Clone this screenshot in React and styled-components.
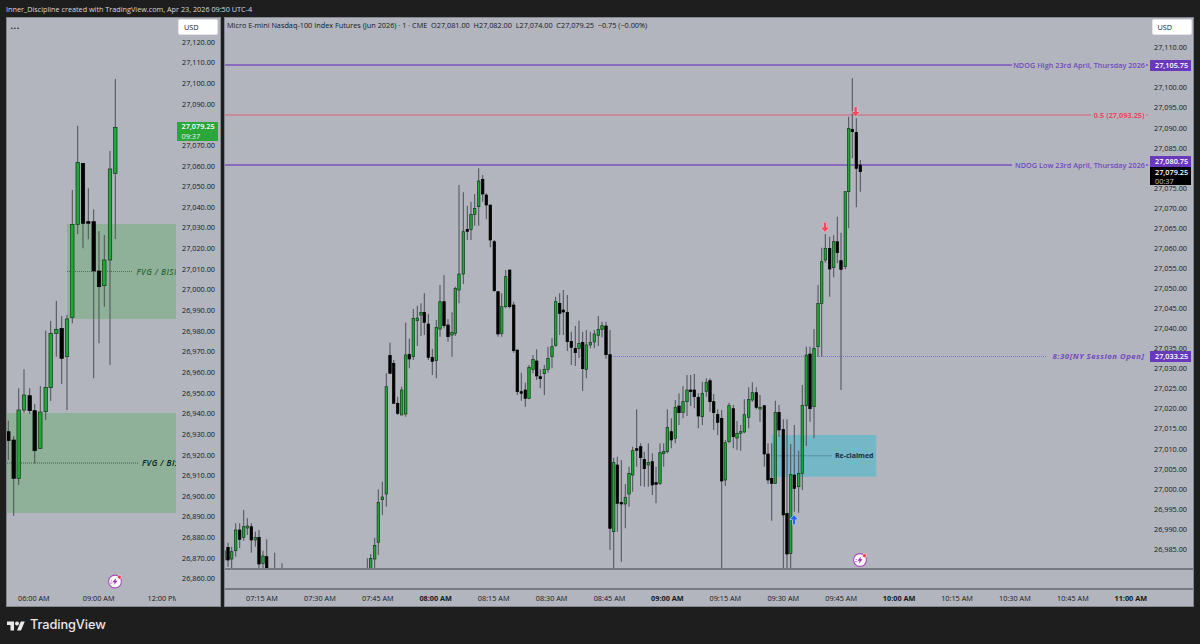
import React from "react";
import styled, { createGlobalStyle } from "styled-components";

const GlobalStyle = createGlobalStyle`
  html, body { margin: 0; padding: 0; background: #1e1e1e; }
  #root { width: 1200px; height: 644px; overflow: hidden; }
`;

const SANS = `"Open Sans", "Noto Sans", sans-serif`;

const Page = styled.div`
  width: 1200px; height: 644px; background: #1e1e1e;
  display: flex; flex-direction: column; font-family: ${SANS};
`;
const Header = styled.div`
  height: 17px; padding-left: 6px; color: #d6d8de; font-size: 7.25px; font-weight: 500; line-height: 18px; white-space: nowrap;
`;
const Panes = styled.div`
  display: flex; gap: 3px; padding-left: 6px; height: 590px;
`;
const Pane = styled.section`
  box-sizing: border-box; width: ${p => p.$w}px; height: 590px; border: 1px solid #84878f;
  background: #b2b5be; display: flex; flex-direction: column;
`;
const Body = styled.div`
  box-sizing: border-box; display: flex; height: ${p => p.$h}px;
  border-bottom: ${p => (p.$line ? "2px solid #777a82" : "none")};
`;
const Plot = styled.div`
  position: relative; width: ${p => p.$w}px; overflow: hidden; flex: none;
  svg { display: block; width: 100%; height: 100%; }
`;
const Axis = styled.div`
  position: relative; flex: 1; padding-top: ${p => p.$pad}px; overflow: hidden;
`;
const Scale = styled.div`
  height: ${p => p.$step}px; line-height: ${p => p.$step}px; text-align: right; padding-right: ${p => p.$right}px;
  font-size: 7.3px; font-weight: 500; color: #131722; white-space: nowrap;
`;
const UsdButton = styled.button`
  position: absolute; top: 1px; left: ${p => p.$left}px; width: 40px; height: 16px; box-sizing: border-box;
  background: #fff; border: 1px solid #e3e4e8; border-radius: 2px; padding: 0 0 0 5px; text-align: left;
  font: 500 7.3px ${SANS}; color: #131722;
`;
const PriceTag = styled.div`
  position: absolute; top: ${p => p.$top}px; left: ${p => p.$left}px; width: 41px; height: ${p => p.$h}px;
  background: ${p => p.$bg}; color: #fff; font-size: 7.3px; line-height: ${p => p.$lh || p.$h}px; padding-left: 5px; box-sizing: border-box;
  font-weight: 600; white-space: nowrap;
`;
const TagTime = styled.div`
  color: ${p => p.$c || "#fff"}; line-height: 8px; font-weight: 500;
`;
const Strip = styled.div`
  box-sizing: border-box; height: 20px; border-bottom: 2px solid #777a82;
`;
const TimeAxis = styled.div`
  height: 16px; width: ${p => p.$w}px; overflow: hidden; display: flex; padding-left: ${p => p.$pad}px; box-sizing: border-box;
`;
const TimeLabel = styled.div`
  flex: 0 0 ${p => p.$step}px; text-align: ${p => p.$align}; font-size: 7.3px; line-height: 17px; white-space: nowrap;
  color: #131722; font-weight: ${p => (p.$bold ? 700 : 500)};
`;
const Dots = styled.div`
  position: absolute; left: 3.5px; top: 3px; color: #1a1a1a; font-size: 9px; font-weight: 700; line-height: 9px; letter-spacing: 0.5px;
`;
const Legend = styled.div`
  position: absolute; left: 2px; top: 2px; color: #131722; font-size: 7.3px; font-weight: 500; line-height: 10px; white-space: nowrap;
`;
const DrawLabel = styled.div`
  position: absolute; top: ${p => p.$y}px; transform: translateY(-50%); white-space: nowrap;
  ${p => (p.$right !== undefined ? `right:${p.$right}px;` : `left:${p.$left}px;`)}
  color: ${p => p.$c}; font-size: ${p => p.$fs || 7.3}px; font-weight: ${p => p.$w || 600};
  font-style: ${p => (p.$it ? "italic" : "normal")}; letter-spacing: ${p => p.$ls || 0}px; line-height: 10px;
`;
const Footer = styled.footer`
  flex: 1; display: flex; align-items: flex-start; gap: 5px; padding: 10px 0 0 7px; color: #e9e9ea;
  svg { width: 18px; height: 14px; margin-top: 1px; fill: #e9e9ea; }
`;
const Brand = styled.span`
  font: 500 12.8px/16px Inter, Roboto, sans-serif; letter-spacing: -0.1px;
`;

/* zoom-derived candle tables: [x, colour, wickTop, bodyTop, bodyBottom, wickBottom] */
const g = "g", b = "b";
const groups = [
  { ox: 224, oy: 360, rows: [
    [0,g,548,572,600,620],[12,b,548,562,600,620],[23,g,560,575,597,626],[35,g,490,510,572,590],[47,b,490,510,538,565],
    [59,g,450,500,532,542],[70,g,475,498,504,525],[82,b,490,500,540,578],[94,g,515,532,540,560],[105,b,510,532,612,626],
    [117,g,572,588,610,626],[128,b,538,590,626,626],[152,null,578,0,0,626],[174,null,610,0,0,626],[430,null,595,0,0,626],
    [440,g,582,595,626,626],[452,g,533,556,597,626],[463,g,388,427,547,585],[475,g,365,411,419,465],[487,g,40,80,402,440],
  ]},
  { ox: 224, oy: 160, rows: [
    [498,b,548,586,640,640],[509,b,600,610,730,730],[521,b,710,730,760,765],[533,g,680,690,765,765],[545,g,488,585,762,770],
    [556,b,536,583,597,625],[568,g,447,475,590,600],[580,g,437,474,482,558],[591,g,430,457,465,528],[601,b,400,457,487,525],
    [613,b,462,492,592,600],[625,b,567,592,604,645],[637,g,480,502,602,655],[648,g,375,425,507,530],[660,b,345,425,497,505],
    [672,b,477,495,530,545],[684,g,457,517,525,590],[694,g,380,385,520,528],[705,g,75,342,390,430],[718,g,97,215,342,372],
    [730,b,137,208,214,240],[741,g,125,163,208,240],[752,g,102,145,163,197],[764,g,25,63,140,197],[776,b,45,58,102,125],
    [787,b,100,105,135,178],[799,b,135,135,240,262],[811,b,240,245,392,395],[822,b,395,395,522,530],
  ]},
  { ox: 500, oy: 280, rows: [
    [5,g,40,80,160,170],[17,g,-30,-10,80,85],[29,b,-30,-30,80,85],[41,b,65,75,212,218],[52,b,210,210,335,345],[64,b,278,335,338,362],
    [76,b,308,330,355,380],[87,g,255,262,355,358],[99,g,225,238,268,280],[110,b,208,243,288,300],[121,b,268,290,296,325],
    [133,g,255,268,281,345],[144,g,200,235,268,278],[156,g,175,200,230,265],[167,g,50,65,196,200],[179,b,40,70,100,165],
    [190,b,30,90,96,165],[202,b,45,97,185,213],[214,b,155,184,202,255],[226,b,138,205,218,258],[237,g,122,190,205,235],
    [248,b,155,187,266,333],[259,g,150,195,268,295],[271,g,155,187,195,205],[283,g,150,162,186,205],[295,g,108,148,166,198],
    [306,g,125,137,148,172],[318,b,125,138,224,236],[330,b,150,224,745,810],[341,g,533,548,755,866],[352,b,530,555,670,755],
    [364,b,540,667,672,845],[376,g,612,652,672,745],[387,g,560,580,642,680],[398,g,500,512,585,635],[410,b,388,506,509,560],
    [422,b,490,500,533,618],[433,b,515,538,566,620],[445,g,490,547,555,620],[457,b,520,545,615,645],[468,b,560,608,612,670],
    [480,g,490,518,610,615],[491,g,490,514,521,560],[502,g,388,442,515,520],[514,b,415,455,480,505],[526,g,360,382,475,490],
    [537,b,340,378,398,435],[549,g,318,365,397,415],[561,g,285,330,365,408],[572,b,285,330,334,378],[583,b,282,330,350,385],
    [595,b,340,352,408,445],[607,g,305,340,410,435],[619,g,295,307,334,350],[630,b,295,302,365,395],[641,b,342,365,398,450],
    [653,b,388,403,427,465],[665,b,390,415,603,866],[676,g,480,488,600,618],[687,g,368,377,485,490],[700,b,375,386,470,505],
    [711,g,423,460,474,510],[722,g,435,455,459,512],[733,g,358,404,456,460],[746,g,322,358,412,445],[757,g,307,338,360,365],
    [769,b,322,338,382,388],[780,g,345,382,386,425],[793,b,377,377,522,560],[804,b,490,522,600,612],[815,b,490,595,610,722],
  ]},
  { ox: 760, oy: 340, rows: [
    [46,g,182,217,430,432],[57,b,195,217,270,290],[70,b,238,268,525,686],[81,b,238,520,642,686],[92,g,312,404,640,686],
    [103,b,255,405,445,515],[116,g,332,400,440,518],[127,g,135,196,400,450],[139,g,20,45,197,318],[150,b,20,42,206,245],
    [162,g,-33,25,200,295],
  ]},
  { ox: 800, oy: 220, rows: [
    [54,g,195,250,380,410],[65,g,83,125,250,410],[76,g,42,85,120,128],[89,b,50,85,147,230],[101,g,45,65,143,172],
    [112,b,-10,65,98,130],[123,b,38,122,148,510],[136,g,-85,-85,140,148],
  ]},
  { ox: 760, oy: 60, rows: [
    [266,g,170,205,395,505],[277,b,55,208,215,295],[289,b,175,217,325,442],[301,b,300,315,335,395],
  ]},
];
const rightCandles = groups.flatMap(({ ox, oy, rows }) =>
  rows.map(([zx, c, wt, bt, bb, wb]) => ({ x: ox + zx / 3, c, wt: oy + wt / 3, bt: oy + bt / 3, bb: oy + bb / 3, wb: oy + wb / 3 }))
);
const leftA = [
  [25,b,362,395,422,480],[41,b,408,420,535,648],[56,g,265,330,535,555],[72,g,208,285,330,338],[89,b,265,287,332,342],
  [104,b,312,332,452,490],[121,g,258,336,445,446],[137,g,92,262,335,360],[152,g,63,100,263,303],[169,g,3,88,100,170],
  [185,b,48,85,175,252],[201,g,45,57,170,330],
].map(([zx, c, wt, bt, bb, wb]) => ({ x: zx / 3, c, wt: 300 + wt / 3, bt: 300 + bt / 3, bb: 300 + bb / 3, wb: 300 + wb / 3 }));
const leftB = [
  [37,g,360,463,742,760],[53,g,167,277,463,492],[69,b,280,280,460,535],[85,b,355,455,458,508],[101,b,418,455,603,925],
  [117,b,483,603,650,820],[133,g,495,570,647,710],[150,g,243,297,570,885],[166,g,27,172,310,507],
].map(([zx, c, wt, bt, bb, wb]) => ({ x: 60 + zx / 3, c, wt: 70 + wt / 3, bt: 70 + bt / 3, bb: 70 + bb / 3, wb: 70 + wb / 3 }));
const leftCandles = [...leftA, ...leftB];

const Candle = ({ d, w }) => (
  <g>
    <line x1={d.x} x2={d.x} y1={d.wt} y2={d.wb} stroke="#54575d" strokeWidth="1.1" />
    {d.c && (
      <rect x={d.x - w / 2} y={d.bt} width={w} height={Math.max(d.bb - d.bt, 1.6)}
        fill={d.c === "g" ? "#1fa737" : "#000"} stroke={d.c === "g" ? "#0f3a18" : "#000"} strokeWidth="0.7" />
    )}
  </g>
);

const ArrowMark = ({ x, y, up, fill, halo }) => (
  <g transform={`translate(${x} ${y}) ${up ? "scale(1 -1)" : ""}`}>
    <path d="M-1.2 -5H1.2V0H3.9L0 4.6L-3.9 0H-1.2Z" fill={fill} stroke={halo} strokeWidth="1" paintOrder="stroke" />
  </g>
);

const Bolt = ({ x, y }) => (
  <g transform={`translate(${x} ${y})`}>
    <circle r="6.4" fill="#fff" stroke="#ab47bc" strokeWidth="1.1" />
    <path d="M1.2 -3.4L-2.6 0.8H-0.4L-1.2 3.4L2.6 -0.8H0.4Z" fill="#9c27b0" />
    <path d="M-5 1.6L-2.6 1.6M-4.4 -0.6L-3 -0.6" stroke="#9c27b0" strokeWidth="0.6" />
    <circle cx="4.4" cy="-4.4" r="1.9" fill="#f23645" stroke="#fff" strokeWidth="0.5" />
  </g>
);

const money = v => v.toLocaleString("en-US", { minimumFractionDigits: 2, maximumFractionDigits: 2 });
const range = (from, to, step) => {
  const out = [];
  for (let v = from; step < 0 ? v >= to : v <= to; v += step) out.push(v);
  return out;
};
/* prices whose scale label sits fully behind a price tag in the reference */
const hiddenPrices = [27105, 27080];
const rightTimes = ["07:15 AM","07:30 AM","07:45 AM","08:00 AM","08:15 AM","08:30 AM","08:45 AM","09:00 AM","09:15 AM","09:30 AM","09:45 AM","10:00 AM","10:15 AM","10:30 AM","10:45 AM","11:00 AM"];

export default function App() {
  return (
    <Page>
      <GlobalStyle />
      <Header>Inner_Discipline created with TradingView.com, Apr 23, 2026 09:50 UTC-4</Header>
      <Panes>
        <Pane $w={215}>
          <Body $h={572}>
            <Plot $w={169}>
              <svg viewBox="7 18 169 572">
                <rect x="67" y="224" width="110" height="95" fill="#90b199" />
                <rect x="6" y="413" width="171" height="100" fill="#8fb199" />
                <line x1="67" x2="133" y1="271.5" y2="271.5" stroke="#31583a" strokeWidth="0.7" strokeDasharray="1 1" />
                <line x1="7" x2="138" y1="463" y2="463" stroke="#1d3a24" strokeWidth="0.7" strokeDasharray="1 1" />
                {leftCandles.map((d, i) => <Candle key={i} d={d} w={3.4} />)}
                <Bolt x={115} y={581.5} />
              </svg>
              <Dots>...</Dots>
              <DrawLabel $left={129.5} $y={253.5} $c="#2e6a3a" $fs={8.2} $it $ls={0.45}>FVG / BISI</DrawLabel>
              <DrawLabel $left={135} $y={444.5} $c="#0c1f10" $fs={8.2} $it $ls={0.45}>FVG / BISI</DrawLabel>
            </Plot>
            <Axis $pad={13.7}>
              {range(27120, 26860, -10).map(v => <Scale key={v} $step={20.65} $right={5}>{money(v)}</Scale>)}
              <UsdButton $left={2}>USD</UsdButton>
              <PriceTag $top={104} $left={0.5} $h={19} $lh={9.5} $bg="#2aa63b">27,079.25<TagTime $c="#e6f4e8">09:37</TagTime></PriceTag>
            </Axis>
          </Body>
          <TimeAxis $w={169} $pad={11}>
            <TimeLabel $step={64.8} $align="left">06:00 AM</TimeLabel>
            <TimeLabel $step={64.8} $align="left">09:00 AM</TimeLabel>
            <TimeLabel $step={64.8} $align="left">12:00 PM</TimeLabel>
          </TimeAxis>
        </Pane>
        <Pane $w={970}>
          <Body $h={552} $line>
            <Plot $w={923}>
              <svg viewBox="225 18 923 550">
                <rect x="771.7" y="435" width="104.5" height="41.7" fill="#74b7c6" />
                <line x1="225" x2="1012" y1="65" y2="65" stroke="#7b55bf" strokeWidth="1.6" />
                <line x1="1146" x2="1148" y1="65" y2="65" stroke="#7b55bf" strokeWidth="1.4" />
                <line x1="225" x2="1091" y1="115" y2="115" stroke="#d9657a" strokeWidth="1.1" />
                <line x1="1146" x2="1148" y1="115" y2="115" stroke="#e8606f" strokeWidth="1.1" />
                <line x1="225" x2="1012" y1="165" y2="165" stroke="#7b55bf" strokeWidth="1.6" />
                <line x1="1146" x2="1148" y1="165" y2="165" stroke="#7b55bf" strokeWidth="1.4" />
                <line x1="611" x2="1047" y1="356.5" y2="356.5" stroke="#7d5cc8" strokeWidth="0.8" strokeDasharray="1 1" />
                <line x1="771.7" x2="832" y1="455.8" y2="455.8" stroke="#2b4a55" strokeWidth="0.7" strokeDasharray="1 1" />
                {rightCandles.map((d, i) => <Candle key={i} d={d} w={2.5} />)}
                <ArrowMark x={855.6} y={112} fill="#f2475c" halo="#f6c9d0" />
                <ArrowMark x={825} y={227.5} fill="#f2475c" halo="#f6c9d0" />
                <ArrowMark x={794} y={519.5} up fill="#2962ff" halo="#dbe5ff" />
                <Bolt x={860} y={560} />
              </svg>
              <Legend>Micro E-mini Nasdaq-100 Index Futures (Jun 2026) · 1 · CME &nbsp;O27,081.00 &nbsp;H27,082.00 &nbsp;L27,074.00 &nbsp;C27,079.25 &nbsp;−0.75 (−0.00%)</Legend>
              <DrawLabel $right={3} $y={47} $c="#7248bf">NDOG High 23rd April, Thursday 2026</DrawLabel>
              <DrawLabel $right={3.5} $y={97} $c="#f0475c" $w={700}>0.5 (27,093.25)</DrawLabel>
              <DrawLabel $right={3} $y={147} $c="#7248bf">NDOG Low 23rd April, Thursday 2026</DrawLabel>
              <DrawLabel $right={3.5} $y={338} $c="#7248bf" $fs={7.8} $it $ls={0.5} $w={700}>8:30[NY Session Open]</DrawLabel>
              <DrawLabel $left={610} $y={437.8} $c="#14303a" $fs={7} $w={700}>Re-claimed</DrawLabel>
            </Plot>
            <Axis $pad={19.3}>
              {range(27110, 26985, -5).map(v => (
                <Scale key={v} $step={20.07} $right={6}>{hiddenPrices.includes(v) ? "" : money(v)}</Scale>
              ))}
              <UsdButton $left={3.5}>USD</UsdButton>
              <PriceTag $top={42} $left={2} $h={10.5} $bg="#6a38ba">27,105.75</PriceTag>
              <PriceTag $top={138} $left={2} $h={10.5} $bg="#6a38ba">27,080.75</PriceTag>
              <PriceTag $top={148.5} $left={2} $h={18.5} $lh={10} $bg="#000">27,079.25<TagTime $c="#c8c9cc">00:37</TagTime></PriceTag>
              <PriceTag $top={333} $left={2} $h={10.5} $bg="#6a38ba">27,033.25</PriceTag>
            </Axis>
          </Body>
          <Strip />
          <TimeAxis $w={968} $pad={8}>
            {rightTimes.map(t => (
              <TimeLabel key={t} $step={57.93} $align="center" $bold={t.endsWith(":00 AM")}>{t}</TimeLabel>
            ))}
          </TimeAxis>
        </Pane>
      </Panes>
      <Footer>
        <svg viewBox="0 0 36 28" aria-hidden="true">
          <path d="M14 25H7V14H0V7h14v18zM28 25h-8l7.5-18h8L28 25z" />
          <circle cx="20" cy="11" r="4" />
        </svg>
        <Brand>TradingView</Brand>
      </Footer>
    </Page>
  );
}
